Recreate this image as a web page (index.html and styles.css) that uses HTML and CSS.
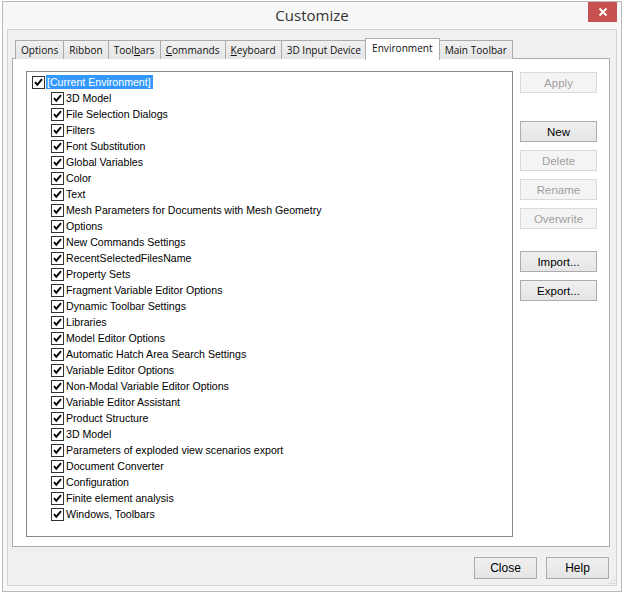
FILE: index.html
```html
<!DOCTYPE html>
<html>
<head>
<meta charset="utf-8">
<link rel="stylesheet" href="styles.css">
</head>
<body>
<div class="window">
  <div class="titlebar">
    <div class="title">Customize</div>
    <div class="close"><svg width="10" height="10" viewBox="0 0 10 10"><path d="M1.5 1.5 L8.5 8.5 M8.5 1.5 L1.5 8.5" stroke="#fff" stroke-width="1.8"/></svg></div>
  </div>
  <div class="client">
    <div class="tabs">
      <div class="tab">Options</div>
      <div class="tab">Ribbon</div>
      <div class="tab">Tool<u>b</u>ars</div>
      <div class="tab"><u>C</u>ommands</div>
      <div class="tab"><u>K</u>eyboard</div>
      <div class="tab">3D Input Device</div>
      <div class="tab active">Environment</div>
      <div class="tab">Main Toolbar</div>
    </div>
    <div class="panel">
      <div class="tree">
        <div class="row root"><span class="cb"></span><span class="label sel">[Current Environment]</span></div>
        <div class="children">
          <div class="row"><span class="cb"></span><span class="label">3D Model</span></div>
          <div class="row"><span class="cb"></span><span class="label">File Selection Dialogs</span></div>
          <div class="row"><span class="cb"></span><span class="label">Filters</span></div>
          <div class="row"><span class="cb"></span><span class="label">Font Substitution</span></div>
          <div class="row"><span class="cb"></span><span class="label">Global Variables</span></div>
          <div class="row"><span class="cb"></span><span class="label">Color</span></div>
          <div class="row"><span class="cb"></span><span class="label">Text</span></div>
          <div class="row"><span class="cb"></span><span class="label">Mesh Parameters for Documents with Mesh Geometry</span></div>
          <div class="row"><span class="cb"></span><span class="label">Options</span></div>
          <div class="row"><span class="cb"></span><span class="label">New Commands Settings</span></div>
          <div class="row"><span class="cb"></span><span class="label">RecentSelectedFilesName</span></div>
          <div class="row"><span class="cb"></span><span class="label">Property Sets</span></div>
          <div class="row"><span class="cb"></span><span class="label">Fragment Variable Editor Options</span></div>
          <div class="row"><span class="cb"></span><span class="label">Dynamic Toolbar Settings</span></div>
          <div class="row"><span class="cb"></span><span class="label">Libraries</span></div>
          <div class="row"><span class="cb"></span><span class="label">Model Editor Options</span></div>
          <div class="row"><span class="cb"></span><span class="label">Automatic Hatch Area Search Settings</span></div>
          <div class="row"><span class="cb"></span><span class="label">Variable Editor Options</span></div>
          <div class="row"><span class="cb"></span><span class="label">Non-Modal Variable Editor Options</span></div>
          <div class="row"><span class="cb"></span><span class="label">Variable Editor Assistant</span></div>
          <div class="row"><span class="cb"></span><span class="label">Product Structure</span></div>
          <div class="row"><span class="cb"></span><span class="label">3D Model</span></div>
          <div class="row"><span class="cb"></span><span class="label">Parameters of exploded view scenarios export</span></div>
          <div class="row"><span class="cb"></span><span class="label">Document Converter</span></div>
          <div class="row"><span class="cb"></span><span class="label">Configuration</span></div>
          <div class="row"><span class="cb"></span><span class="label">Finite element analysis</span></div>
          <div class="row"><span class="cb"></span><span class="label">Windows, Toolbars</span></div>
        </div>
      </div>
      <div class="side">
        <button class="btn disabled">Apply</button>
        <div class="group">
          <button class="btn">New</button>
          <button class="btn disabled">Delete</button>
          <button class="btn disabled">Rename</button>
          <button class="btn disabled">Overwrite</button>
        </div>
        <div class="group">
          <button class="btn">Import...</button>
          <button class="btn">Export...</button>
        </div>
      </div>
    </div>
    <div class="footer">
      <button class="btn wide">Close</button>
      <button class="btn wide">Help</button>
      <span class="grip"></span>
    </div>
  </div>
</div>
</body>
</html>
```
FILE: styles.css
```css
html, body {
  margin: 0;
  padding: 0;
  background: #ffffff;
}
body {
  width: 624px;
  height: 594px;
  overflow: hidden;
}
.window {
  box-sizing: border-box;
  margin: 1px 2px 0 2px;
  width: 620px;
  height: 591px;
  border: 1px solid #b9b9b9;
  background: #f7f7f7;
  display: flex;
  flex-direction: column;
}
.titlebar {
  height: 27px;
  display: flex;
  justify-content: center;
  align-items: flex-start;
  position: relative;
}
.title {
  font-family: "Open Sans", "Noto Sans", sans-serif;
  font-size: 15px;
  color: #333;
  margin-top: 3px;
}
.close {
  position: absolute;
  right: 4px;
  top: 0;
  width: 29px;
  height: 20px;
  background: #c75050;
  display: flex;
  align-items: center;
  justify-content: center;
}
.client {
  margin: 0 4px 5px 4px;
  flex: 1;
  border: 1px solid #d4d4d4;
  background: #f0f0f0;
  padding: 8px 6px 6px 4px;
  display: flex;
  flex-direction: column;
}
.tabs {
  display: flex;
  padding-left: 3px;
  height: 21px;
  align-items: flex-end;
  position: relative;
  z-index: 1;
}
.tab {
  font-family: "Open Sans", "Noto Sans", sans-serif;
  font-size: 10.1px;
  color: #111;
  line-height: 18px;
  padding: 0 5px;
  border: 1px solid #acacac;
  border-bottom: none;
  background: linear-gradient(#f0f0f0, #e5e5e5);
  margin-right: -1px;
  box-sizing: border-box;
  height: 19px;
  white-space: nowrap;
}
.tab.active {
  background: #ffffff;
  height: 22px;
  line-height: 19px;
  padding: 0 6px;
  margin: 0 -1px -1px -1px;
  position: relative;
  z-index: 2;
}
.tab u {
  text-decoration: underline;
  text-underline-offset: 1px;
}
.panel {
  flex: 1;
  border: 1px solid #acacac;
  background: #ffffff;
  display: flex;
  padding: 12px 12px 9px 13px;
  margin-top: -1px;
}
.tree {
  flex: 1;
  border: 1px solid #828790;
  background: #fff;
  padding: 2px 0 0 5px;
  font-family: "Liberation Sans", Arial, sans-serif;
  font-size: 10.6px;
  color: #000;
}
.row {
  height: 16px;
  display: flex;
  align-items: center;
}
.children {
  padding-left: 19px;
}
.cb {
  width: 11px;
  height: 11px;
  border: 1px solid #333;
  background: #fff;
  margin-right: 1px;
  flex: none;
  background-image: url("data:image/svg+xml,%3Csvg xmlns='http://www.w3.org/2000/svg' width='11' height='11' viewBox='0 0 11 11'%3E%3Cpath d='M2 5.2 L4.3 7.8 L9 2.2' fill='none' stroke='%23000' stroke-width='2'/%3E%3C/svg%3E");
  background-repeat: no-repeat;
}
.label {
  padding: 0 1px;
  line-height: 14px;
}
.label.sel {
  background: #3399ff;
  color: #fff;
  padding: 0 2px 0 1px;
}
.side {
  width: 77px;
  margin-left: 7px;
  display: flex;
  flex-direction: column;
  padding-top: 1px;
}
.group {
  display: flex;
  flex-direction: column;
  gap: 8px;
  margin-top: 28px;
}
.group + .group {
  margin-top: 22px;
}
.btn {
  box-sizing: border-box;
  height: 21px;
  width: 77px;
  border: 1px solid #acacac;
  background: linear-gradient(#f0f0f0, #e5e5e5);
  font-family: "Liberation Sans", Arial, sans-serif;
  font-size: 11.5px;
  color: #000;
  padding: 0;
  margin: 0;
}
.btn.disabled {
  background: #f4f4f4;
  border-color: #d9d9d9;
  color: #a0a0a0;
}
.footer {
  display: flex;
  justify-content: flex-end;
  gap: 9px;
  padding-top: 10px;
  padding-right: 1px;
  position: relative;
}
.btn.wide {
  width: 63px;
  height: 22px;
  font-size: 12px;
}
.grip {
  position: absolute;
  right: -6px;
  bottom: -6px;
  width: 9px;
  height: 9px;
  background-image: radial-gradient(#b5b5b5 0.8px, transparent 1px);
  background-size: 3px 3px;
  clip-path: polygon(100% 0, 100% 100%, 0 100%);
}
```
